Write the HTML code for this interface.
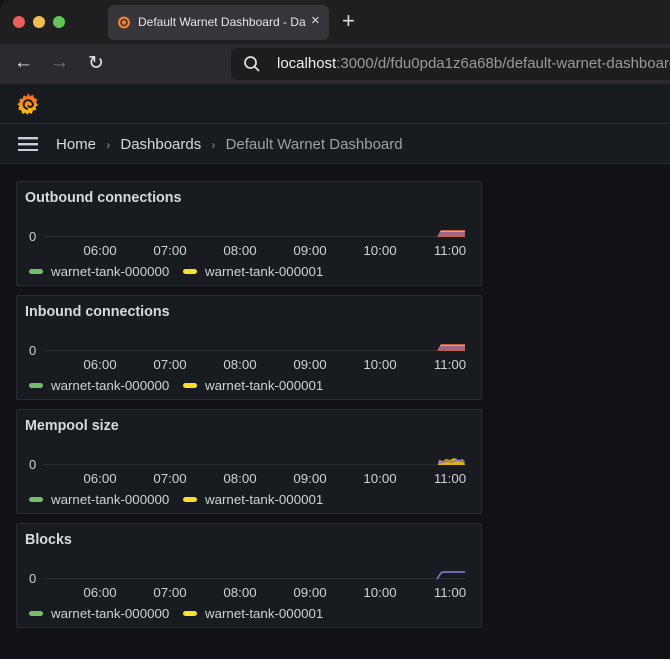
<!DOCTYPE html>
<html><head><style>
*{margin:0;padding:0;box-sizing:border-box}
body{width:670px;height:659px;overflow:hidden;background:#111217;font-family:"Liberation Sans",sans-serif;position:relative;color:#ccccdc}
.abs{position:absolute}
.tabbar{left:0;top:0;width:670px;height:44px;background:#1f1f22;border-top-left-radius:10px}
.dot{width:12px;height:12px;border-radius:50%;top:16px}
.tab{left:108px;top:5px;width:221px;height:35px;background:#35353a;border-radius:6px}
.nav{left:0;top:44px;width:670px;height:40px;background:#2b2b2f}
.url{left:231px;top:48px;width:450px;height:32px;background:#1d1d20;border-radius:6px}
.ghead{left:0;top:84px;width:670px;height:40px;background:#181b1f;border-bottom:1px solid #2a2c32}
.crumb{left:0;top:124px;width:670px;height:40px;background:#181b1f;border-bottom:1px solid #2a2c32}
.panel{left:16px;width:466px;height:105px;background:#181b1f;border:1px solid #2a2c33;border-radius:2px}
.pt{position:absolute;left:8px;top:8px;font-size:14.3px;font-weight:bold;color:#d8d9e0}
.zero{position:absolute;left:12px;top:47px;font-size:13px;color:#d0d1d8}
.base{position:absolute;left:26px;top:54px;width:422px;height:1px;background:#2c2e35}
.tick{position:absolute;top:61px;font-size:13.3px;color:#d0d1d8;width:50px;text-align:center}
.leg{position:absolute;top:82px;font-size:13.3px;color:#d0d1d8}
.sw{position:absolute;top:87px;width:14px;height:5px;border-radius:3px}
</style></head><body>
<div class="abs tabbar"></div>
<div class="abs dot" style="left:13px;background:#ec5f59"></div>
<div class="abs dot" style="left:33px;background:#f4bd4f"></div>
<div class="abs dot" style="left:53px;background:#62c554"></div>
<div class="abs tab"></div>
<svg class="abs" style="left:116px;top:14px" width="16" height="16" viewBox="0 0 16 16"><circle cx="8" cy="8.5" r="6" fill="#f0802a"/><circle cx="8" cy="8.5" r="3" fill="none" stroke="#35353a" stroke-width="1.5"/></svg>
<div class="abs" style="left:138px;top:15px;font-size:12px;color:#e8e8ea;width:168px;white-space:nowrap;overflow:hidden">Default Warnet Dashboard - Dashboards</div>
<div class="abs" style="left:311px;top:12px;font-size:15px;color:#ddd">×</div>
<div class="abs" style="left:342px;top:8px;font-size:22px;color:#ddd">+</div>
<div class="abs nav"></div>
<div class="abs" style="left:14px;top:52px;font-size:19px;color:#e8e8e8">←</div>
<div class="abs" style="left:50px;top:52px;font-size:19px;color:#77777a">→</div>
<div class="abs" style="left:88px;top:52px;font-size:19px;color:#e8e8e8">↻</div>
<div class="abs url"></div>
<svg class="abs" style="left:243px;top:55px" width="18" height="18" viewBox="0 0 18 18"><circle cx="7.5" cy="7.5" r="5.5" fill="none" stroke="#ddd" stroke-width="1.8"/><path d="M11.5 11.5L16 16" stroke="#ddd" stroke-width="1.8"/></svg>
<div class="abs" style="left:277px;top:55px;font-size:15px;color:#9a9a9e;white-space:nowrap"><span style="color:#f0f0f0">localhost</span>:3000/d/fdu0pda1z6a68b/default-warnet-dashboard?</div>
<div class="abs ghead"></div>
<svg class="abs" style="left:15px;top:91px" width="26" height="26" viewBox="0 0 24 24"><defs><linearGradient id="g" x1="0" y1="1" x2="0" y2="0"><stop offset="0" stop-color="#fbca0a"/><stop offset="1" stop-color="#f05a28"/></linearGradient></defs><path d="M12 2l2 2.5 3-1 .5 3 3 1-1 3 2 2.5-2.5 1.5.5 3-3 .5-1 3-3-1L12 22 9.5 20l-3 1-.5-3-3-1 1-3L2 12l2.5-1.5L4 7.5l3-.5 1-3 3 1z" fill="url(#g)"/><path d="M12 16.5a4 4 0 1 1 3.5-6 2.3 2.3 0 1 1-3.5 2.5" fill="none" stroke="#181b1f" stroke-width="1.8"/></svg>
<div class="abs crumb"></div>
<svg class="abs" style="left:18px;top:137px" width="20" height="14"><rect y="0" width="20" height="2.4" fill="#ccccdc"/><rect y="6" width="20" height="2.4" fill="#ccccdc"/><rect y="12" width="20" height="2.4" fill="#ccccdc"/></svg>
<div class="abs" style="left:56px;top:136px;font-size:15px;white-space:nowrap;color:#d8d9e0">Home <span style="color:#8e8e99;font-size:12px;margin:0 6px">›</span> Dashboards <span style="color:#8e8e99;font-size:12px;margin:0 6px">›</span> <span style="color:#9fa0aa">Default Warnet Dashboard</span></div>

<div class="abs panel" style="top:181px">
<div class="pt">Outbound connections</div>
<div class="zero">0</div><div class="base"></div>
<div class="tick" style="left:58px">06:00</div><div class="tick" style="left:128px">07:00</div><div class="tick" style="left:198px">08:00</div><div class="tick" style="left:268px">09:00</div><div class="tick" style="left:338px">10:00</div><div class="tick" style="left:408px">11:00</div>
<svg style="position:absolute;left:418px;top:46px" width="32" height="10"><path d="M2 9 L6 2 H30 V9Z" fill="#c0633a"/><path d="M4 5 H30 M3 7 H30" stroke="#7f6bd6" stroke-width="1"/><path d="M5 3.5H30" stroke="#e0b400" stroke-width="1"/></svg>
<div class="sw" style="left:12px;background:#73bf69"></div><div class="leg" style="left:34px">warnet-tank-000000</div>
<div class="sw" style="left:166px;background:#fade2a"></div><div class="leg" style="left:188px">warnet-tank-000001</div>
</div>
<div class="abs panel" style="top:295px">
<div class="pt">Inbound connections</div>
<div class="zero">0</div><div class="base"></div>
<div class="tick" style="left:58px">06:00</div><div class="tick" style="left:128px">07:00</div><div class="tick" style="left:198px">08:00</div><div class="tick" style="left:268px">09:00</div><div class="tick" style="left:338px">10:00</div><div class="tick" style="left:408px">11:00</div>
<svg style="position:absolute;left:418px;top:46px" width="32" height="10"><path d="M2 9 L6 2 H30 V9Z" fill="#c0633a"/><path d="M4 5 H30 M3 7 H30" stroke="#7f6bd6" stroke-width="1"/><path d="M5 3.5H30" stroke="#e0b400" stroke-width="1"/></svg>
<div class="sw" style="left:12px;background:#73bf69"></div><div class="leg" style="left:34px">warnet-tank-000000</div>
<div class="sw" style="left:166px;background:#fade2a"></div><div class="leg" style="left:188px">warnet-tank-000001</div>
</div>
<div class="abs panel" style="top:409px">
<div class="pt">Mempool size</div>
<div class="zero">0</div><div class="base"></div>
<div class="tick" style="left:58px">06:00</div><div class="tick" style="left:128px">07:00</div><div class="tick" style="left:198px">08:00</div><div class="tick" style="left:268px">09:00</div><div class="tick" style="left:338px">10:00</div><div class="tick" style="left:408px">11:00</div>
<svg style="position:absolute;left:418px;top:46px" width="32" height="10"><path d="M3 9 L4 4 L8 5 L11 3 L15 4 L19 2 L24 4 L28 3 L30 9Z" fill="#e0b400"/><path d="M3 7 L8 6 L12 5 L17 6 L22 4 L30 6" stroke="#7f6bd6" stroke-width="1.5" fill="none"/></svg>
<div class="sw" style="left:12px;background:#73bf69"></div><div class="leg" style="left:34px">warnet-tank-000000</div>
<div class="sw" style="left:166px;background:#fade2a"></div><div class="leg" style="left:188px">warnet-tank-000001</div>
</div>
<div class="abs panel" style="top:523px">
<div class="pt">Blocks</div>
<div class="zero">0</div><div class="base"></div>
<div class="tick" style="left:58px">06:00</div><div class="tick" style="left:128px">07:00</div><div class="tick" style="left:198px">08:00</div><div class="tick" style="left:268px">09:00</div><div class="tick" style="left:338px">10:00</div><div class="tick" style="left:408px">11:00</div>
<svg style="position:absolute;left:418px;top:46px" width="32" height="10"><path d="M2 9 L6 3 Q7 2 9 2 H30" stroke="#8a7fe0" stroke-width="1.5" fill="none"/></svg>
<div class="sw" style="left:12px;background:#73bf69"></div><div class="leg" style="left:34px">warnet-tank-000000</div>
<div class="sw" style="left:166px;background:#fade2a"></div><div class="leg" style="left:188px">warnet-tank-000001</div>
</div>
</body></html>
